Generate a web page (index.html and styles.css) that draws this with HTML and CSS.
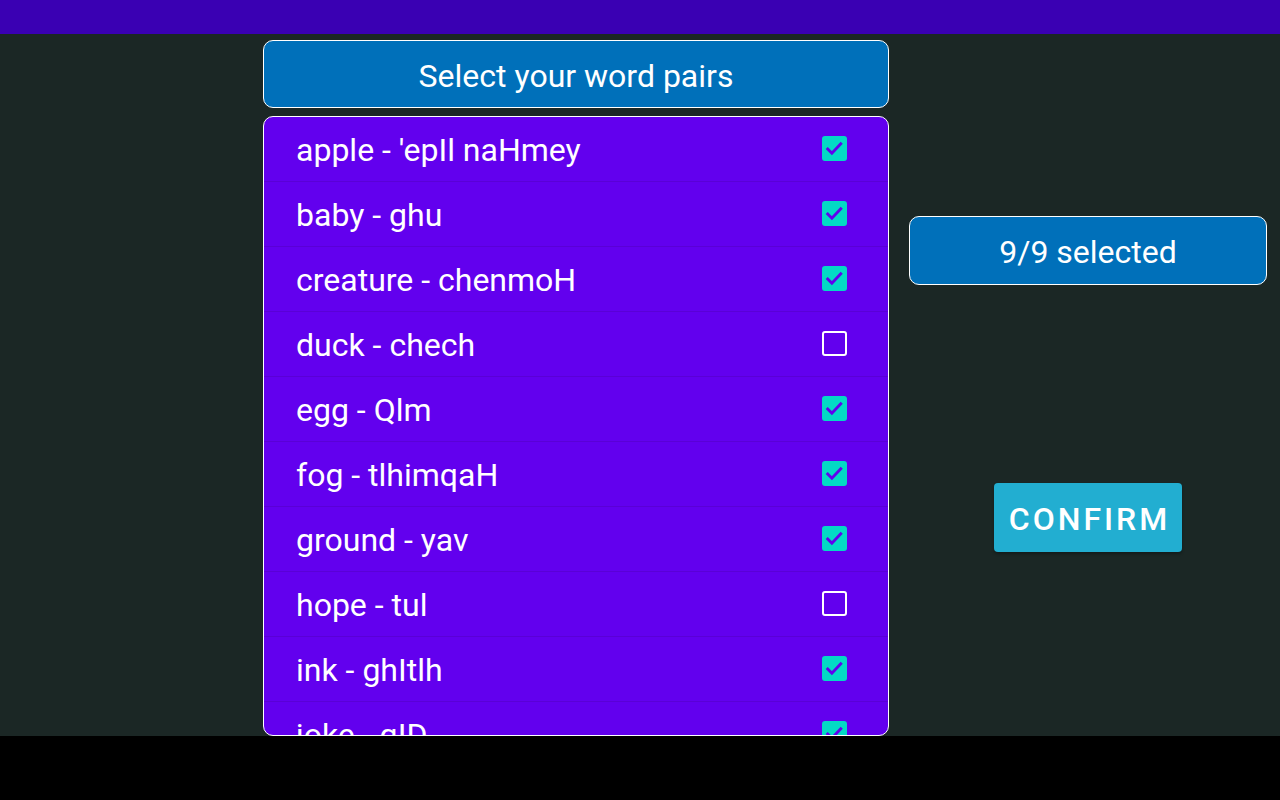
FILE: index.html
```html
<!DOCTYPE html>
<html>
<head>
<meta charset="utf-8">
<link rel="stylesheet" href="styles.css">
</head>
<body>
<div class="app">
  <div class="topbar"></div>
  <div class="main">
    <div class="left">
      <div class="title">Select your word pairs</div>
      <div class="list">
        <div class="row"><span class="label">apple - 'epIl naHmey</span><span class="cb on"><svg viewBox="0 0 24 24"><path d="M5.5 12.5l4 4 8.5-9"/></svg></span></div>
        <div class="row"><span class="label">baby - ghu</span><span class="cb on"><svg viewBox="0 0 24 24"><path d="M5.5 12.5l4 4 8.5-9"/></svg></span></div>
        <div class="row"><span class="label">creature - chenmoH</span><span class="cb on"><svg viewBox="0 0 24 24"><path d="M5.5 12.5l4 4 8.5-9"/></svg></span></div>
        <div class="row"><span class="label">duck - chech</span><span class="cb off"></span></div>
        <div class="row"><span class="label">egg - Qlm</span><span class="cb on"><svg viewBox="0 0 24 24"><path d="M5.5 12.5l4 4 8.5-9"/></svg></span></div>
        <div class="row"><span class="label">fog - tlhimqaH</span><span class="cb on"><svg viewBox="0 0 24 24"><path d="M5.5 12.5l4 4 8.5-9"/></svg></span></div>
        <div class="row"><span class="label">ground - yav</span><span class="cb on"><svg viewBox="0 0 24 24"><path d="M5.5 12.5l4 4 8.5-9"/></svg></span></div>
        <div class="row"><span class="label">hope - tul</span><span class="cb off"></span></div>
        <div class="row"><span class="label">ink - ghItlh</span><span class="cb on"><svg viewBox="0 0 24 24"><path d="M5.5 12.5l4 4 8.5-9"/></svg></span></div>
        <div class="row"><span class="label">joke - qID</span><span class="cb on"><svg viewBox="0 0 24 24"><path d="M5.5 12.5l4 4 8.5-9"/></svg></span></div>
      </div>
    </div>
    <div class="right">
      <div class="count">9/9 selected</div>
      <button class="confirm">CONFIRM</button>
    </div>
  </div>
  <div class="navbar"></div>
</div>
</body>
</html>
```
FILE: styles.css
```css
html, body {
  margin: 0;
  padding: 0;
  background: #1b2725;
  font-family: Roboto, "Noto Sans", sans-serif;
  color: #fff;
}
.app {
  width: 1280px;
  height: 800px;
  display: flex;
  flex-direction: column;
  overflow: hidden;
}
.topbar {
  height: 34px;
  background: #3a00b3;
  flex: none;
}
.main {
  flex: none;
  height: 702px;
  display: flex;
  gap: 20px;
  padding-left: 263px;
  box-sizing: border-box;
}
.left {
  width: 626px;
  display: flex;
  flex-direction: column;
  padding-top: 6px;
  gap: 8px;
}
.title {
  height: 68px;
  box-sizing: border-box;
  border: 1px solid #fff;
  border-radius: 10px;
  background: #0070ba;
  display: flex;
  align-items: center;
  justify-content: center;
  font-size: 32px;
  padding-top: 4px;
}
.list {
  height: 620px;
  box-sizing: border-box;
  border: 1px solid #fff;
  border-radius: 10px;
  background: #6200ee;
  overflow: hidden;
}
.row {
  height: 65px;
  box-sizing: border-box;
  border-bottom: 1px solid #5a00d6;
  display: flex;
  align-items: center;
  justify-content: space-between;
  padding: 0 41px 0 32px;
}
.label {
  font-size: 32px;
  line-height: 38px;
  padding-top: 2px;
}
.cb {
  width: 25px;
  height: 25px;
  box-sizing: border-box;
  border-radius: 3px;
  display: flex;
  align-items: center;
  justify-content: center;
  margin-top: -2px;
}
.cb.on {
  background: #03dac5;
}
.cb.off {
  border: 2.5px solid #fff;
}
.cb svg {
  width: 25px;
  height: 25px;
}
.cb svg path {
  fill: none;
  stroke: #6200ee;
  stroke-width: 2.8;
  stroke-linecap: square;
}
.right {
  width: 358px;
  display: flex;
  flex-direction: column;
  align-items: center;
  padding-top: 182px;
}
.count {
  width: 100%;
  height: 69px;
  box-sizing: border-box;
  border: 1px solid #fff;
  border-radius: 10px;
  background: #0070ba;
  display: flex;
  align-items: center;
  justify-content: center;
  font-size: 32px;
  padding-top: 2px;
}
.confirm {
  margin-top: 198px;
  width: 188px;
  height: 69px;
  border: none;
  border-radius: 4px;
  background: #22aed1;
  color: #fff;
  font-family: Roboto, sans-serif;
  font-weight: 500;
  font-size: 32px;
  letter-spacing: 3px;
  padding: 2px 0 0 3px;
  box-shadow: 0 2px 3px rgba(0,0,0,0.3);
}
.navbar {
  flex: 1;
  background: #000;
}
```
